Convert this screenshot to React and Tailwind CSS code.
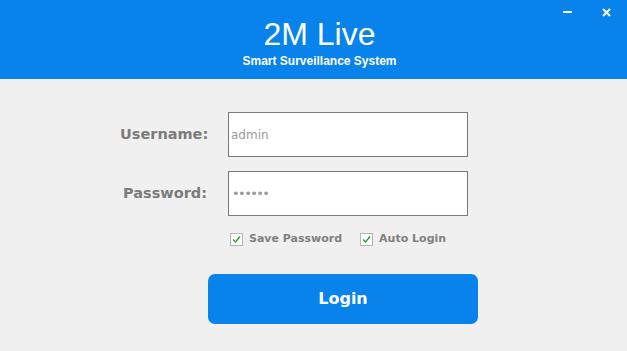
import React from 'react'

function Check() {
  return (
    <span className="w-[13px] h-[13px] border border-[#b5b5b5] bg-white flex items-center justify-center">
      <svg width="9" height="9" viewBox="0 0 9 9" fill="none">
        <path d="M1 4.5 L3.5 7 L8 1.5" stroke="#2e9a3a" strokeWidth="1.3" />
      </svg>
    </span>
  )
}

export default function App() {
  return (
    <div className="w-[627px] h-[351px] bg-[#f0f0f0] flex flex-col font-['DejaVu_Sans',sans-serif]">
      <div className="relative h-[79px] bg-[#0883eb] flex flex-col items-center pl-[12px] text-white">
        <div className="mt-[15px] text-[32px] leading-[38px] font-['Liberation_Sans',sans-serif]">2M Live</div>
        <div className="mt-[1px] text-[12px] leading-[14px] font-bold font-['Liberation_Sans',sans-serif]">Smart Surveillance System</div>
        <div className="absolute top-0 right-0 flex items-center">
          <div className="w-[40px] h-[24px] flex items-center justify-center">
            <div className="w-[9px] h-[2px] bg-white" />
          </div>
          <div className="w-[40px] h-[24px] flex items-center justify-center pr-[2px]">
            <svg width="9" height="9" viewBox="0 0 9 9">
              <path d="M1 1 L8 8 M8 1 L1 8" stroke="white" strokeWidth="2" />
            </svg>
          </div>
        </div>
      </div>

      <div className="flex flex-col pl-[120px] pt-[33px]">
        <div className="flex items-center">
          <label className="w-[108px] text-right pr-[21px] text-[14.5px] font-bold text-[#7b7b7b]">Username:</label>
          <div className="w-[240px] h-[45px] border border-[#7a7a7a] bg-white flex items-center px-[2px] text-[12px] text-[#9a9a9a]">admin</div>
        </div>
        <div className="flex items-center mt-[14px]">
          <label className="w-[108px] text-right pr-[21px] text-[14.5px] font-bold text-[#7b7b7b]">Password:</label>
          <div className="w-[240px] h-[45px] border border-[#7a7a7a] bg-white flex items-center px-[3px] text-[13px] text-[#9a9a9a] tracking-[-1.6px]">••••••</div>
        </div>
        <div className="flex items-center ml-[110px] mt-[15px] text-[11px] font-bold text-[#808080]">
          <Check />
          <span className="ml-[6px]">Save Password</span>
          <span className="ml-[18px]"><Check /></span>
          <span className="ml-[6px]">Auto Login</span>
        </div>
        <button className="ml-[88px] mt-[26px] w-[270px] h-[50px] rounded-[7px] bg-[#0883eb] text-white text-[16px] font-bold">
          Login
        </button>
      </div>
    </div>
  )
}
